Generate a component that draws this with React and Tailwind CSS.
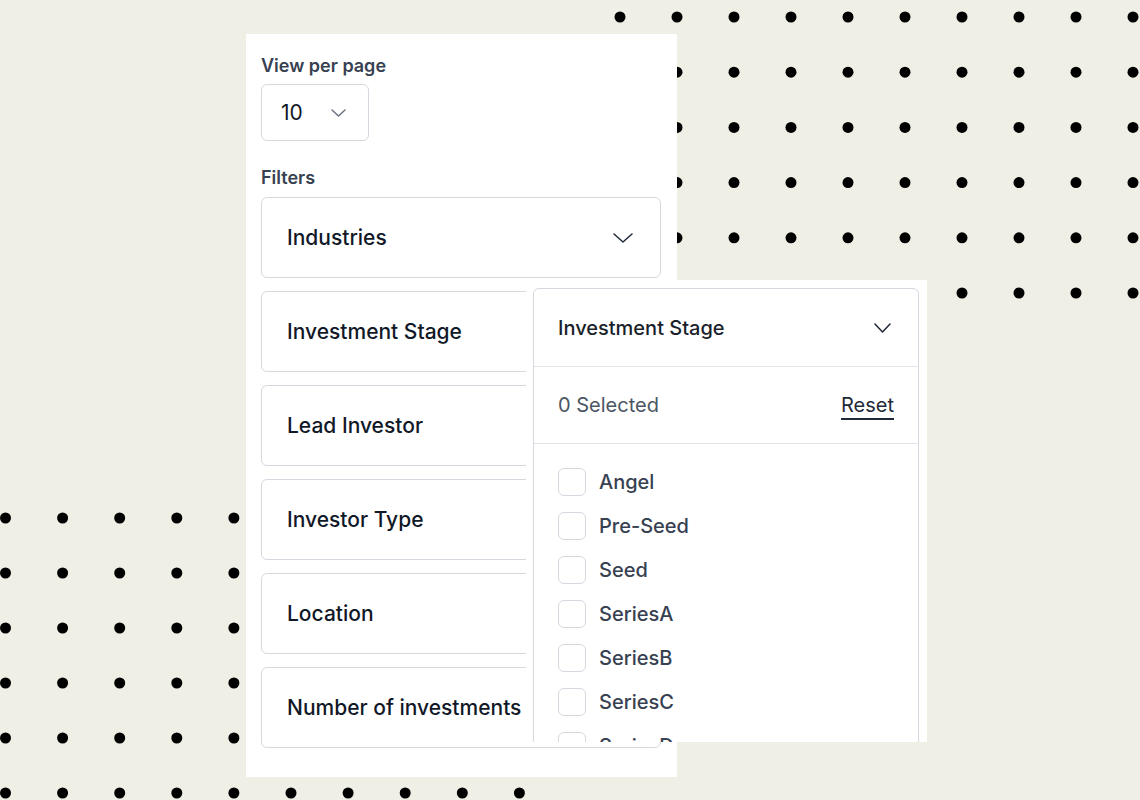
import React from "react";

const FILTERS = [
  "Industries",
  "Investment Stage",
  "Lead Investor",
  "Investor Type",
  "Location",
  "Number of investments",
];

const STAGES = ["Angel", "Pre-Seed", "Seed", "SeriesA", "SeriesB", "SeriesC", "SeriesD"];

function Chevron({ className, w = 20, h = 10, stroke = 1.6 }) {
  return (
    <svg width={w} height={h} viewBox={`0 0 ${w} ${h}`} className={className} fill="none">
      <polyline
        points={`1,1 ${w / 2},${h - 1} ${w - 1},1`}
        stroke="currentColor"
        strokeWidth={stroke}
        strokeLinecap="round"
        strokeLinejoin="round"
      />
    </svg>
  );
}

function Dots() {
  const top = [];
  for (let r = 0; r < 6; r++) {
    for (let c = 0; c < 10; c++) {
      top.push(<circle key={`t${r}-${c}`} cx={620 + c * 57} cy={17 + r * 55.2} r="5.5" />);
    }
  }
  const bottom = [];
  for (let r = 0; r < 6; r++) {
    for (let c = 0; c < 10; c++) {
      bottom.push(<circle key={`b${r}-${c}`} cx={5.5 + c * 57.1} cy={518 + r * 55} r="5.5" />);
    }
  }
  return (
    <svg className="absolute inset-0" width="1140" height="800" fill="#000">
      {top}
      {bottom}
    </svg>
  );
}

function StagePopover() {
  return (
    <div className="absolute left-[280px] top-[246px] h-[462px] w-[401px] overflow-hidden bg-white pl-[7px] pr-[8px] pt-[8px]">
      <div className="rounded-t-[6px] border border-[#d5d8de]">
        <div className="flex h-[77px] items-center justify-between pl-[24px] pr-[27px]">
          <span className="pt-[1px] text-[20px] font-medium text-[#1a1f2b]">Investment Stage</span>
          <Chevron className="text-[#1f2937]" w={17} h={10} stroke={1.5} />
        </div>
        <div className="flex h-[77px] items-center justify-between border-t border-[#e1e3e8] pl-[24px] pr-[24px]">
          <span className="text-[20px] text-[#4b5563]">0 Selected</span>
          <span className="mt-[3px] border-b-2 border-[#1f2937] text-[20px] leading-[25px] text-[#1f2937]">Reset</span>
        </div>
        <div className="flex flex-col gap-[16px] border-t border-[#e1e3e8] pl-[24px] pt-[24px]">
          {STAGES.map((s) => (
            <label key={s} className="flex h-[28px] items-center gap-[13px]">
              <span className="h-[28px] w-[28px] shrink-0 rounded-[6px] border border-[#d5d8de] bg-white" />
              <span className="text-[20px] font-medium leading-[28px] text-[#374151]">{s}</span>
            </label>
          ))}
        </div>
      </div>
    </div>
  );
}

export default function App() {
  return (
    <div
      className="relative h-[800px] w-[1140px] overflow-hidden bg-[#f0efe5]"
      style={{ fontFamily: "Inter, 'Noto Sans', sans-serif" }}
    >
      <Dots />
      <div className="relative pl-[246px] pt-[34px]">
        <div className="relative h-[743px] w-[431px] bg-white pl-[15px] pr-[16px] pt-[20px]">
          <p className="mb-[6px] text-[18px] font-semibold leading-[24px] text-[#374151]">View per page</p>
          <div className="flex h-[57px] w-[108px] items-center gap-[28px] rounded-[6px] border border-[#d5d8de] pl-[19px]">
            <span className="text-[21px] text-[#111827]">10</span>
            <Chevron className="text-[#6b7280]" w={15} h={8} stroke={1.5} />
          </div>
          <p className="mb-[7px] mt-[25px] text-[18px] font-semibold leading-[24px] text-[#374151]">Filters</p>
          <div className="flex flex-col gap-[13px]">
            {FILTERS.map((f, i) => (
              <div
                key={f}
                className="flex h-[81px] items-center justify-between rounded-[6px] border border-[#d5d8de] pl-[25px] pr-[27px]"
              >
                <span className="text-[21px] font-medium text-[#111827]">{f}</span>
                {i === 0 && <Chevron className="text-[#1f2937]" w={20} h={10} stroke={1.5} />}
              </div>
            ))}
          </div>
          <StagePopover />
        </div>
      </div>
    </div>
  );
}
